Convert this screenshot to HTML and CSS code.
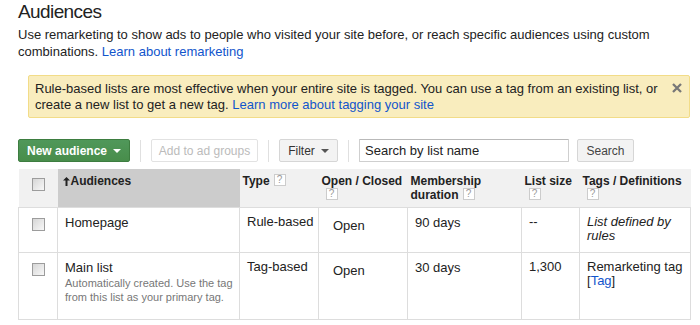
FILE: index.html
```html
<!DOCTYPE html>
<html lang="en">
<head>
<meta charset="utf-8">
<title>Audiences</title>
<link rel="stylesheet" href="styles.css">
</head>
<body>
<div class="page">
  <h1 class="title">Audiences</h1>
  <p class="intro">Use remarketing to show ads to people who visited your site before, or reach specific audiences using custom combinations. <a href="#">Learn about remarketing</a></p>

  <div class="notice">
    <p class="notice-text">Rule-based lists are most effective when your entire site is tagged. You can use a tag from an existing list, or create a new list to get a new tag. <a href="#">Learn more about tagging your site</a></p>
    <button class="notice-close" aria-label="Close">
      <svg width="10" height="10" viewBox="0 0 10 10"><path d="M1 1L9 9M9 1L1 9" stroke="#777" stroke-width="2.3" fill="none"/></svg>
    </button>
  </div>

  <div class="toolbar">
    <button class="btn btn-primary">New audience <span class="caret"></span></button>
    <span class="sep"></span>
    <button class="btn btn-disabled">Add to ad groups</button>
    <span class="sep"></span>
    <button class="btn btn-filter">Filter <span class="caret caret-dark"></span></button>
    <span class="sep"></span>
    <input class="search" type="text" value="Search by list name">
    <button class="btn btn-search">Search</button>
  </div>

  <table class="lists">
    <colgroup>
      <col class="c-check"><col class="c-name"><col class="c-type"><col class="c-open"><col class="c-dur"><col class="c-size"><col class="c-tags">
    </colgroup>
    <thead>
      <tr>
        <th class="th-check"><span class="cb"></span></th>
        <th class="sorted"><svg class="sort-arrow" width="7" height="9" viewBox="0 0 7 9"><path d="M3.5 0L7 3.6H4.5V9H2.5V3.6H0Z" fill="#222"/></svg>Audiences</th>
        <th>Type<span class="help">?</span></th>
        <th>Open / Closed <span class="help">?</span></th>
        <th>Membership duration<span class="help">?</span></th>
        <th>List size <span class="help">?</span></th>
        <th>Tags / Definitions <span class="help">?</span></th>
      </tr>
    </thead>
    <tbody>
      <tr class="r1">
        <td class="td-check"><span class="cb"></span></td>
        <td><div class="name">Homepage</div></td>
        <td>Rule-based</td>
        <td class="open">Open</td>
        <td class="dur">90 days</td>
        <td>--</td>
        <td class="def">List defined by rules</td>
      </tr>
      <tr class="r2">
        <td class="td-check"><span class="cb"></span></td>
        <td class="td-name"><div class="name">Main list</div><div class="desc">Automatically created. Use the tag from this list as your primary tag.</div></td>
        <td>Tag-based</td>
        <td class="open">Open</td>
        <td class="dur">30 days</td>
        <td>1,300</td>
        <td>Remarketing tag<br>[<a href="#">Tag</a>]</td>
      </tr>
    </tbody>
  </table>
</div>
</body>
</html>
```

FILE: styles.css
```css
* {
  box-sizing: border-box;
}

body {
  margin: 0;
  background: #fff;
  color: #222;
  font-family: "Liberation Sans", Arial, sans-serif;
}

a {
  color: #15c;
  text-decoration: none;
}

.page {
  padding: 1px 10px 0 18px;
}

.title {
  margin: 0;
  font-size: 19px;
  font-weight: normal;
  line-height: 22px;
  letter-spacing: -0.6px;
}

.intro {
  margin: 3px 0 0;
  font-size: 13px;
  line-height: 17px;
}

.notice {
  position: relative;
  margin: 15px 0 0 10px;
  padding: 5px 20px 4px 6px;
  background: #f9edbe;
  border: 1px solid #f2dc88;
  border-radius: 2px;
}

.notice-text {
  margin: 0;
  font-size: 13px;
  line-height: 16px;
}

.notice-close {
  position: absolute;
  top: 7px;
  right: 7px;
  display: block;
  width: 10px;
  height: 10px;
  padding: 0;
  border: 0;
  background: none;
}

.notice-close svg {
  display: block;
}

.toolbar {
  display: flex;
  align-items: center;
  height: 23px;
  margin-top: 21px;
}

.btn {
  display: inline-flex;
  align-items: center;
  justify-content: center;
  gap: 6px;
  height: 23px;
  padding: 0;
  border: 1px solid #d6d6d6;
  border-radius: 2px;
  background: #f3f3f3;
  color: #444;
  font-family: inherit;
  font-size: 12px;
}

.btn-primary {
  width: 112px;
  border-color: #3d7d40;
  background: linear-gradient(#50985a, #488d4b);
  color: #fff;
  font-weight: bold;
}

.btn-disabled {
  width: 107px;
  border-color: #e2e2e2;
  background: #fff;
  color: #bbb;
}

.btn-filter {
  width: 59px;
  color: #333;
}

.btn-search {
  width: 57px;
  margin-left: 8px;
}

.caret {
  width: 0;
  height: 0;
  border-left: 4px solid transparent;
  border-right: 4px solid transparent;
  border-top: 4px solid #fff;
}

.caret-dark {
  border-top-color: #555;
}

.sep {
  width: 1px;
  height: 22px;
  margin: 0 10px;
  background: #e0e0e0;
}

.search {
  width: 210px;
  height: 23px;
  padding: 0 5px;
  border: 1px solid #cfcfcf;
  border-top-color: #b9b9b9;
  border-radius: 1px;
  color: #222;
  font-family: inherit;
  font-size: 13px;
}

.lists {
  width: 672px;
  margin-top: 7px;
  border-collapse: collapse;
  table-layout: fixed;
  font-size: 13px;
}

.c-check { width: 39px; }
.c-name { width: 182px; }
.c-type { width: 79px; }
.c-open { width: 89px; }
.c-dur { width: 114px; }
.c-size { width: 58px; }
.c-tags { width: 111px; }

.lists th {
  height: 38px;
  padding: 5px 3px 0;
  background: #f1f1f1;
  color: #222;
  font-size: 12px;
  font-weight: bold;
  line-height: 14px;
  text-align: left;
  vertical-align: top;
}

.lists th.sorted {
  padding-left: 5px;
  background: #ccc;
}

.sort-arrow {
  margin-right: 1px;
  vertical-align: -1px;
}

.lists .th-check,
.lists .td-check {
  padding-left: 0;
  padding-right: 0;
}

.help {
  display: inline-block;
  width: 12px;
  height: 12px;
  margin: 0 0 0 4px;
  border: 1px solid #ccc;
  background: #fff;
  color: #999;
  font-size: 10px;
  font-weight: normal;
  line-height: 10px;
  text-align: center;
  vertical-align: top;
}

.cb {
  display: block;
  width: 13px;
  height: 13px;
  margin: 3px auto 0;
  border: 1px solid #9c9c9c;
  background: linear-gradient(135deg, #d6d6d6, #f8f8f8);
}

.th-check .cb {
  margin-top: 4px;
}

.lists td {
  padding: 7px 3px 0 7px;
  border: 1px solid #ddd;
  line-height: 14px;
  vertical-align: top;
}

.r1 td {
  height: 45px;
}

.r2 td {
  height: 67px;
}

.name,
.lists .dur {
  line-height: 16px;
}

.desc {
  color: #777;
  font-size: 11px;
  line-height: 14px;
}

.lists .open {
  padding: 11px 3px 0 14px;
}

.def {
  font-style: italic;
}
```
